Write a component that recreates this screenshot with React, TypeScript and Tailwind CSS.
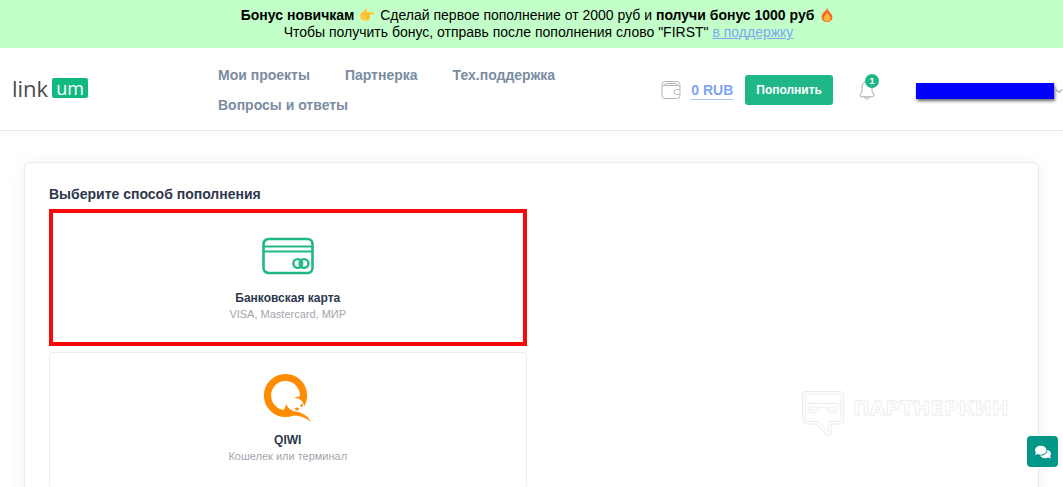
import { FaComments } from "react-icons/fa";

const navItems = [
  { name: "Мои проекты", link: "#projects" },
  { name: "Партнерка", link: "#partners" },
  { name: "Тех.поддержка", link: "#support" },
  { name: "Вопросы и ответы", link: "#faq" },
];

const PointingHand = () => (
  <svg className="mx-0.5 inline-block h-4 w-3.5 align-[-3px]" viewBox="1 0 14 16">
    <path
      d="M1 8.5C1 6.5 2.5 5.5 4 4.6L6.6 2.2C7.6 1.2 9 2.2 8.3 3.3L7.3 4.9H13.8C15.3 4.9 15.3 7.4 13.8 7.4H10.3C11.6 7.6 11.4 9.2 10.6 9.4C11.2 10.2 10.9 11.3 10 11.6C10.4 12.6 9.8 13.6 8.6 13.6H5C2.6 13.6 1 11.6 1 8.5Z"
      fill="#ffc83d"
    />
    <path
      d="M10.3 7.4H7.6M10.6 9.4H7.6M10 11.6H7.4M7.3 4.9L6 6.6"
      stroke="#f2a52b"
      strokeWidth="0.8"
      strokeLinecap="round"
      fill="none"
    />
  </svg>
);

const Fire = () => (
  <svg className="mx-0.5 inline-block h-4 w-3.5 align-[-3px]" viewBox="1 0 14 16">
    <path
      d="M8.2 1C8.6 3.4 10.4 4.6 11.6 6.2C13 8 13.5 9 13.4 10.4C13.2 13.2 11 15 8 15C5 15 2.8 13.2 2.6 10.4C2.5 8.4 3.4 7 4.6 5.6C6 4 7.6 3 8.2 1Z"
      fill="#f4672c"
    />
    <path
      d="M8 5.5C8.6 7 11.4 8.3 11.4 11C11.4 13 9.9 14.3 8 14.3C6 14.3 4.6 13 4.6 11.1C4.6 8.8 7.4 7.8 8 5.5Z"
      fill="#ffb636"
    />
  </svg>
);

const Banner = () => (
  <div className="bg-[#c3ffc8] pt-[7px] pb-[7px] pl-3.5 text-center text-sm leading-[17px] text-black">
    <p>
      <b>Бонус новичкам</b> <PointingHand /> Сделай первое пополнение от 2000 руб и{" "}
      <b>получи бонус 1000 руб</b> <Fire />
    </p>
    <p>
      Чтобы получить бонус, отправь после пополнения слово "FIRST"{" "}
      <a href="#support" className="text-[#7fa6f0] underline">
        в поддержку
      </a>
    </p>
  </div>
);

const WalletIcon = () => (
  <svg className="h-5 w-5" viewBox="0 0 20 20" fill="none" stroke="#b5b5b5">
    <path d="M19 7V4.5Q19 1.5 16 1.5H4Q1 1.5 1 4.5V15.5Q1 18.5 4 18.5H16.5Q19 18.5 19 16V14.5" />
    <path d="M1.3 6.5Q1.5 5.5 3 5.5H17Q19 5.5 19 7.5V9.5H15.5A2.5 2.5 0 0 0 15.5 14.5H19V9.5" />
    <path d="M3.5 5.3Q4 3.5 6 3.5H14Q16 3.5 16.5 5.3" />
  </svg>
);

const BellIcon = () => (
  <svg className="h-5 w-4" viewBox="0 0 16 20" fill="none" stroke="#a8a8a8">
    <path d="M8 1.5C4.8 1.5 3 4 3 7V10.5C3 12.5 1.2 13.5 1 15.2C0.9 16.2 1.5 16.8 2.5 16.8H13.5C14.5 16.8 15.1 16.2 15 15.2C14.8 13.5 13 12.5 13 10.5V7C13 4 11.2 1.5 8 1.5Z" />
    <path d="M5.5 17Q6 19 8 19Q10 19 10.5 17" />
  </svg>
);

const Header = () => (
  <header className="flex items-center border-b border-[#e8e8ec] pt-3 pb-2.5 pl-3">
    <a
      href="#home"
      className="mb-1 flex w-[206px] shrink-0 items-center gap-1 font-['Open_Sans',sans-serif] leading-5 text-[#4a4a4a]"
    >
      <span className="text-[22px]">link</span>
      <span className="rounded-xs bg-[#10b981] px-1 text-lg leading-5 text-white">um</span>
    </a>
    <nav className="flex flex-1 flex-wrap gap-x-[35px] text-sm leading-[30px] font-bold text-[#7b8ca2]">
      {navItems.map((item) => (
        <a key={item.name} href={item.link}>
          {item.name}
        </a>
      ))}
    </nav>
    <div className="flex shrink-0 items-center">
      <WalletIcon />
      <a
        href="#balance"
        className="ml-2.5 border-b border-[#a9c4f7] text-sm leading-[18px] font-bold text-[#7ea4f3]"
      >
        0 RUB
      </a>
      <button className="ml-3 h-[30px] rounded-[3px] bg-[#20b788] px-[11px] text-xs font-bold text-white">
        Пополнить
      </button>
      <button className="relative ml-[26px]" aria-label="Уведомления">
        <BellIcon />
        <span className="absolute -top-1.5 left-1.5 h-3.5 w-3.5 rounded-full bg-[#20b788] text-[9px] leading-[14px] font-bold text-white">
          1
        </span>
      </button>
      <button className="ml-[41px] flex items-center pt-0.5" aria-label="Профиль">
        <span className="h-4 w-[138px] bg-[#0000ff] shadow-[1px_2px_3px_rgba(0,0,0,0.6)]" />
        <svg className="h-2 w-[9px]" viewBox="0 0 9 8" fill="none" stroke="#666">
          <path d="M2 2.5L5 5.5L8 2.5" />
        </svg>
      </button>
    </div>
  </header>
);

const CardIcon = () => (
  <svg className="h-[38px] w-[52px]" viewBox="0 0 52 38" fill="none" stroke="#20b788" strokeWidth="2.6">
    <rect x="1.5" y="2" width="49" height="34" rx="5" />
    <path d="M1.5 9.5H50.5M1.5 14.5H50.5" strokeWidth="2.2" />
    <circle cx="35.8" cy="26.5" r="4.4" strokeWidth="2.4" />
    <circle cx="42" cy="26.5" r="4.4" strokeWidth="2.4" />
  </svg>
);

const QiwiIcon = () => (
  <svg className="h-[50px] w-[50px]" viewBox="0 0 50 50">
    <circle cx="22.5" cy="22.5" r="18" fill="none" stroke="#ff8c00" strokeWidth="7.2" />
    <path
      fill="#fff"
      d="M24 25L31 25.5C36 24.5 39.6 27.5 40.3 31C41.6 32.5 43 35.5 41 38C37 41 29 39.5 26 36.5C24.5 34.5 23.5 33 23 31Z"
    />
    <path
      fill="#ff8c00"
      d="M23 30.5C24 34.5 28 37.6 33 38.6C39.5 39.8 45 43 48 48.8C43 45 37 42.6 31.5 42.4L24 42L20 37.5C22 35.5 22.8 33.5 23 30.5Z"
    />
    <path fill="#ff8c00" d="M31 25.2C34 24.6 37.5 25.8 39.6 28.8L41 25L37.2 22L36.4 24C34.4 23.2 32.4 23.8 31 25.2Z" />
    <ellipse cx="34" cy="36" rx="2" ry="1.5" fill="#ff8c00" transform="rotate(-15 34 36)" />
    <ellipse cx="38.6" cy="32.6" rx="1.2" ry="1.6" fill="#ff8c00" transform="rotate(20 38.6 32.6)" />
  </svg>
);

const methods = [
  { name: "Банковская карта", hint: "VISA, Mastercard, МИР", icon: <CardIcon />, active: true },
  { name: "QIWI", hint: "Кошелек или терминал", icon: <QiwiIcon />, active: false },
];

const Watermark = () => (
  <svg
    className="pointer-events-none absolute right-12 bottom-12 h-[50px] w-[214px]"
    viewBox="0 0 214 50"
    fill="none"
    stroke="#ebebeb"
  >
    <path d="M4 2.5H39Q42.5 2.5 42.5 6V32Q42.5 35 39 35H30V45Q29 48 26 46L16 35H5Q1.5 35 1.5 31V6Q1.5 2.5 4 2.5Z" />
    <path d="M6 5H38Q40 5 40 7V30Q40 32.5 38 32.5H27.5V43L18 32.5H6Q4 32.5 4 30V7Q4 5 6 5Z" />
    <path d="M7 14.5H37V19Q37 24 32.5 24H30Q26 24 25.5 18.5H18.5Q18 24 14 24H11.5Q7 24 7 19Z" />
    <path d="M9.5 18H16Q15.5 21.5 13.5 21.5H12Q9.5 21.5 9.5 18ZM28 18H34.5Q34.5 21.5 32 21.5H30.5Q28 21.5 28 18Z" />
    <text
      x="52"
      y="26"
      className="font-['DejaVu_Sans',sans-serif] text-xl font-bold"
      strokeWidth="0.8"
    >
      ПАРТНЕРКИН
    </text>
  </svg>
);

const App = () => {
  return (
    <div className="relative flex h-screen flex-col overflow-hidden bg-white font-['Liberation_Sans',Arial,sans-serif]">
      <Banner />
      <Header />
      <main className="min-h-0 flex-1 px-6 pt-[31px]">
        <section className="rounded-md border border-[#e9e9f1] px-6 pt-5 pb-6 shadow-[0_0_16px_rgba(80,80,220,0.07)]">
          <h1 className="mb-1 text-sm leading-[22px] font-bold text-[#2e384d]">
            Выберите способ пополнения
          </h1>
          <div className="grid grid-cols-2 gap-x-2.5 gap-y-1.5">
            {methods.map((item) => (
              <button
                key={item.name}
                className={
                  item.active
                    ? "col-start-1 flex h-[137px] flex-col items-center border-4 border-[#f80808]"
                    : "col-start-1 flex h-[137px] flex-col items-center rounded-sm border border-[#ededf1] p-0.5"
                }
              >
                <span className="mt-3.5 flex h-[58px] items-center">{item.icon}</span>
                <span className="mt-[5px] text-xs leading-4 font-bold text-[#2e384d]">{item.name}</span>
                <span className="text-[11px] leading-4 text-[#a3a6ae]">{item.hint}</span>
              </button>
            ))}
          </div>
        </section>
      </main>
      <Watermark />
      <button
        className="absolute right-[5px] bottom-5 flex h-[31px] w-[31px] items-center justify-center rounded-sm bg-[#009688] text-white"
        aria-label="Чат"
      >
        <FaComments size={16} />
      </button>
    </div>
  );
};
export default App;
